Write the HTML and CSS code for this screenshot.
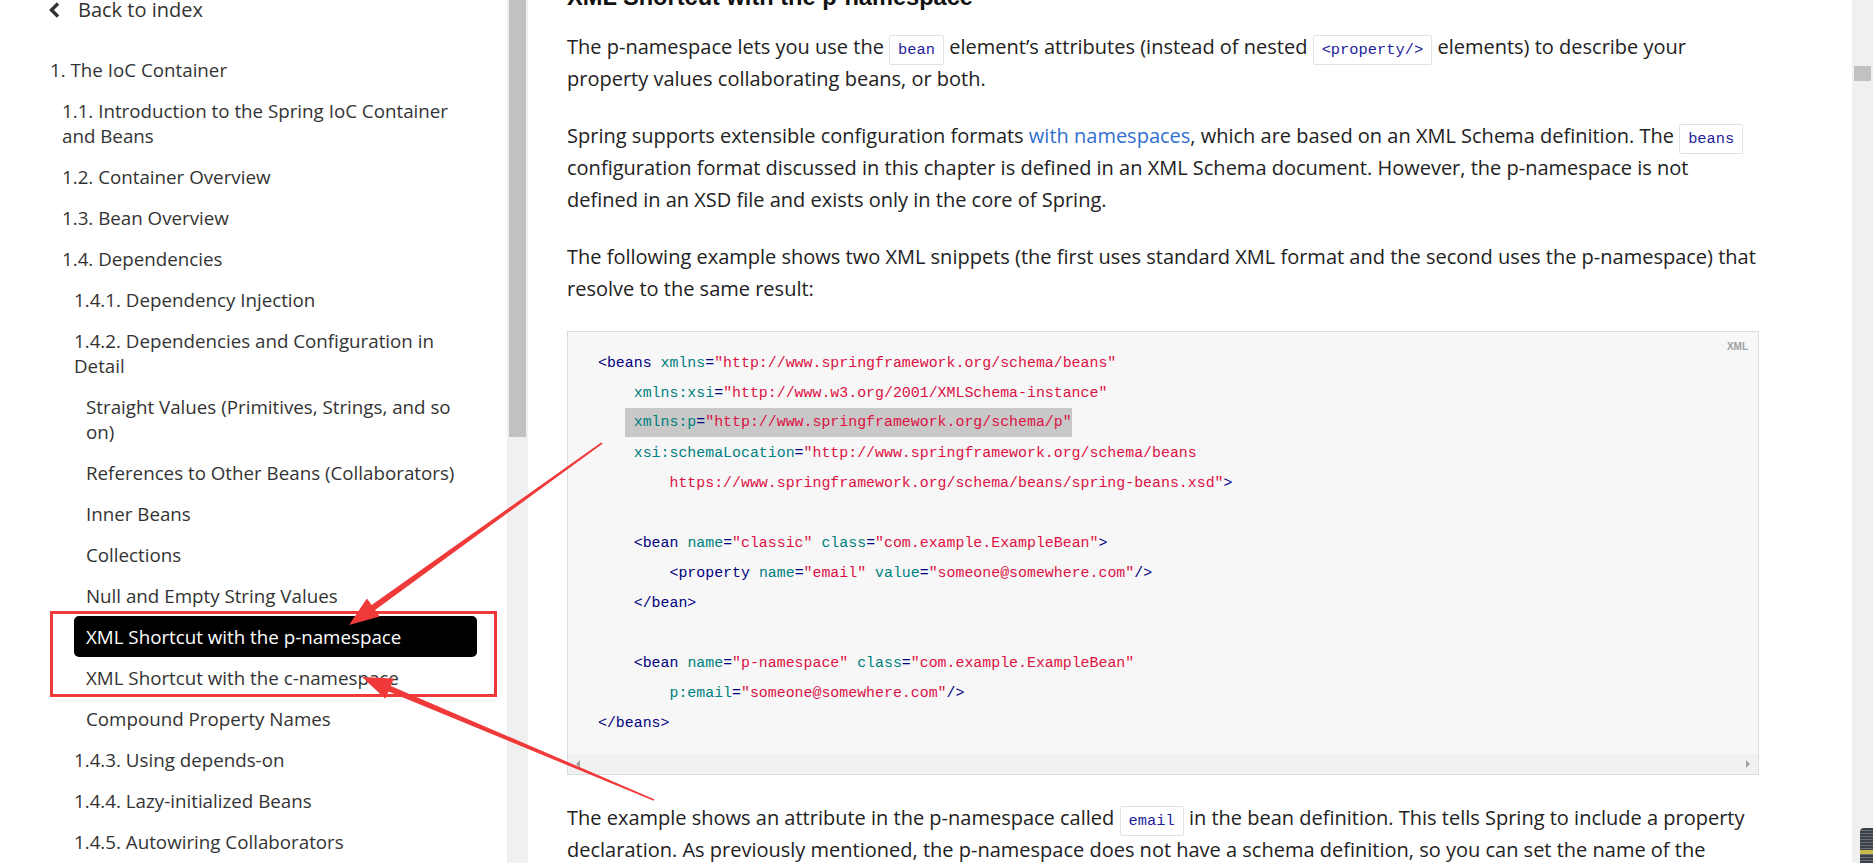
FILE: index.html
```html
<!DOCTYPE html>
<html lang="en">
<head>
<meta charset="utf-8">
<title>XML Shortcut with the p-namespace</title>
<link rel="stylesheet" href="styles.css">
</head>
<body>
<div class="app">
  <aside class="sidebar">
    <a class="back" href="#">
      <svg class="chev" width="12" height="16" viewBox="0 0 12 16"><path d="M10 1.5 L3.5 8 L10 14.5" fill="none" stroke="#333" stroke-width="3.4"/></svg>
      <span>Back to index</span>
    </a>
    <nav class="toc">
      <ul>
        <li><a href="#">1. The IoC Container</a>
          <ul>
            <li><a href="#">1.1. Introduction to the Spring IoC Container and Beans</a></li>
            <li><a href="#">1.2. Container Overview</a></li>
            <li><a href="#">1.3. Bean Overview</a></li>
            <li><a href="#">1.4. Dependencies</a>
              <ul>
                <li><a href="#">1.4.1. Dependency Injection</a></li>
                <li><a href="#">1.4.2. Dependencies and Configuration in Detail</a>
                  <ul>
                    <li><a href="#">Straight Values (Primitives, Strings, and so on)</a></li>
                    <li><a href="#">References to Other Beans (Collaborators)</a></li>
                    <li><a href="#">Inner Beans</a></li>
                    <li><a href="#">Collections</a></li>
                    <li><a href="#">Null and Empty String Values</a></li>
                    <li><a class="active" href="#">XML Shortcut with the p-namespace</a></li>
                    <li><a href="#">XML Shortcut with the c-namespace</a></li>
                    <li><a href="#">Compound Property Names</a></li>
                  </ul>
                </li>
                <li><a href="#">1.4.3. Using depends-on</a></li>
                <li><a href="#">1.4.4. Lazy-initialized Beans</a></li>
                <li><a href="#">1.4.5. Autowiring Collaborators</a></li>
              </ul>
            </li>
          </ul>
        </li>
      </ul>
    </nav>
  </aside>
  <div class="vscroll"><div class="thumb side-thumb"></div></div>

  <main class="content">
    <div class="doc">
      <h4 class="sect-title">XML Shortcut with the p-namespace</h4>
      <p>The p-namespace lets you use the <code class="ic">bean</code> element’s attributes (instead of nested <code class="ic">&lt;property/&gt;</code> elements) to describe your property values collaborating beans, or both.</p>
      <p>Spring supports extensible configuration formats <a class="link" href="#">with namespaces</a>, which are based on an XML Schema definition. The <code class="ic">beans</code> configuration format discussed in this chapter is defined in an XML Schema document. However, the p-namespace is not defined in an XSD file and exists only in the core of Spring.</p>
      <p>The following example shows two XML snippets (the first uses standard XML format and the second uses the p-namespace) that resolve to the same result:</p>
      <div class="listing">
        <span class="lang">XML</span>
        <div class="code">
<div class="ln"><span class="t">&lt;beans</span> <span class="a">xmlns</span><span class="t">=</span><span class="s">"http://www.springframework.org/schema/beans"</span></div>
<div class="ln">    <span class="a">xmlns:xsi</span><span class="t">=</span><span class="s">"http://www.w3.org/2001/XMLSchema-instance"</span></div>
<div class="ln">   <span class="sel"> <span class="a">xmlns:p</span><span class="t">=</span><span class="s">"http://www.springframework.org/schema/p"</span></span></div>
<div class="ln">    <span class="a">xsi:schemaLocation</span><span class="t">=</span><span class="s">"http://www.springframework.org/schema/beans</span></div>
<div class="ln"><span class="s">        https://www.springframework.org/schema/beans/spring-beans.xsd"</span><span class="t">&gt;</span></div>
<div class="ln"></div>
<div class="ln">    <span class="t">&lt;bean</span> <span class="a">name</span><span class="t">=</span><span class="s">"classic"</span> <span class="a">class</span><span class="t">=</span><span class="s">"com.example.ExampleBean"</span><span class="t">&gt;</span></div>
<div class="ln">        <span class="t">&lt;property</span> <span class="a">name</span><span class="t">=</span><span class="s">"email"</span> <span class="a">value</span><span class="t">=</span><span class="s">"someone@somewhere.com"</span><span class="t">/&gt;</span></div>
<div class="ln">    <span class="t">&lt;/bean&gt;</span></div>
<div class="ln"></div>
<div class="ln">    <span class="t">&lt;bean</span> <span class="a">name</span><span class="t">=</span><span class="s">"p-namespace"</span> <span class="a">class</span><span class="t">=</span><span class="s">"com.example.ExampleBean"</span></div>
<div class="ln">        <span class="a">p:email</span><span class="t">=</span><span class="s">"someone@somewhere.com"</span><span class="t">/&gt;</span></div>
<div class="ln"><span class="t">&lt;/beans&gt;</span></div>
        </div>
        <div class="hscroll"><span class="arr arr-l"></span><span class="arr arr-r"></span></div>
      </div>
      <p>The example shows an attribute in the p-namespace called <code class="ic">email</code> in the bean definition. This tells Spring to include a property declaration. As previously mentioned, the p-namespace does not have a schema definition, so you can set the name of the attribute to the property name.</p>
    </div>
  </main>
  <div class="vscroll"><div class="thumb page-thumb"></div></div>

  <svg class="annot" width="1873" height="863" viewBox="0 0 1873 863">
    <rect x="51.5" y="612.5" width="444" height="83" fill="none" stroke="#f03a3a" stroke-width="3"/>
    <polygon fill="#f03a3a" points="602.5,443.7 375.1,609.9 379.8,616.4 349,625 366.9,598.6 371.6,605.1 601.5,442.3"/>
    <polygon fill="#f03a3a" points="653.7,800.8 388.5,691.4 385.4,698.8 362,677 393.9,678.5 390.8,685.9 654.3,799.2"/>
  </svg>
  <div class="widget"></div>
</div>
</body>
</html>
```

FILE: styles.css
```css
html, body {
  margin: 0;
  height: 863px;
  overflow: hidden;
  background: #fff;
}

body {
  font-family: "Open Sans", "Liberation Sans", sans-serif;
}

.app {
  position: relative;
  display: flex;
  height: 863px;
}

/* ---------- sidebar ---------- */
.sidebar {
  width: 507px;
  flex: none;
  box-sizing: border-box;
  padding: 0 30px 0 38px;
  overflow: hidden;
  color: #333;
}

.back {
  display: flex;
  align-items: center;
  gap: 18px;
  height: 20px;
  padding-left: 10px;
  font-size: 20px;
  line-height: 20px;
  color: #333;
  text-decoration: none;
}

.chev {
  flex: none;
}

.toc {
  margin-top: 29px;
}

.toc ul {
  list-style: none;
  margin: 0;
  padding: 0;
}

.toc ul ul {
  padding-left: 12px;
}

.toc a {
  display: block;
  padding: 8px 12px;
  font-size: 18.75px;
  line-height: 25px;
  color: #333;
  text-decoration: none;
  border-radius: 5px;
}

.toc a.active {
  background: #000;
  color: #fff;
}

/* ---------- fake scrollbars ---------- */
.vscroll {
  width: 21px;
  flex: none;
  background: #f0f0f0;
}

.thumb {
  margin-left: 2px;
  width: 17px;
  background: #c1c1c1;
}

.side-thumb {
  height: 437px;
}

.page-thumb {
  margin-top: 66px;
  height: 15px;
}

/* ---------- main ---------- */
.content {
  flex: 1;
  min-width: 0;
  box-sizing: border-box;
  padding: 0 93px 0 39px;
  overflow: hidden;
  color: #222;
  font-size: 20px;
  line-height: 32px;
}

.doc {
  width: 1192px;
}

.sect-title {
  font-family: "Liberation Sans", Arial, sans-serif;
  font-weight: 700;
  font-size: 23.6px;
  line-height: 28px;
  color: #111;
  margin: -17px 0 20px;
}

.content p {
  margin: 0 0 25px;
}

.ic {
  font-family: "Liberation Mono", monospace;
  font-size: 15.4px;
  line-height: 1;
  color: #1f1f9e;
  background: #fff;
  border: 1px solid #e2e2e2;
  border-radius: 2px;
  padding: 5px 8px;
}

.link {
  color: #2f6fcf;
  text-decoration: none;
}

/* ---------- code listing ---------- */
.listing {
  position: relative;
  margin: 26px 0 27px;
  background: #f7f7f7;
  border: 1px solid #dcdcdc;
}

.lang {
  position: absolute;
  top: 9px;
  right: 10px;
  font-family: "Liberation Sans", Arial, sans-serif;
  font-size: 10px;
  line-height: 12px;
  font-weight: 700;
  color: #a0a0a0;
}

.code {
  padding: 16px 30px;
  font-family: "Liberation Mono", monospace;
  font-size: 14.9px;
  line-height: 30px;
  color: #333;
}

.ln {
  white-space: pre;
  height: 30px;
}

.t { color: #000080; }
.a { color: #008080; }
.s { color: #dd1144; }

.sel {
  display: inline-block;
  vertical-align: top;
  line-height: 29px;
  background: #c8c8c8;
}

.hscroll {
  height: 20px;
  background: #f1f1f1;
  display: flex;
  align-items: center;
  justify-content: space-between;
  padding: 0 8px;
}

.arr {
  width: 0;
  height: 0;
  border-top: 4px solid transparent;
  border-bottom: 4px solid transparent;
}

.arr-l {
  border-right: 4px solid #a3a3a3;
}

.arr-r {
  border-left: 4px solid #a3a3a3;
}

/* ---------- overlays ---------- */
.annot {
  position: absolute;
  left: 0;
  top: 0;
  pointer-events: none;
}

.widget {
  position: absolute;
  left: 1860px;
  top: 828px;
  width: 13px;
  height: 35px;
  border-radius: 4px 0 0 0;
  background:
    linear-gradient(to bottom, transparent 0 22px, #c9b84a 22px 26px, transparent 26px),
    repeating-linear-gradient(to bottom, #3b3f46 0 2px, #6a6e76 2px 3px);
}
```
